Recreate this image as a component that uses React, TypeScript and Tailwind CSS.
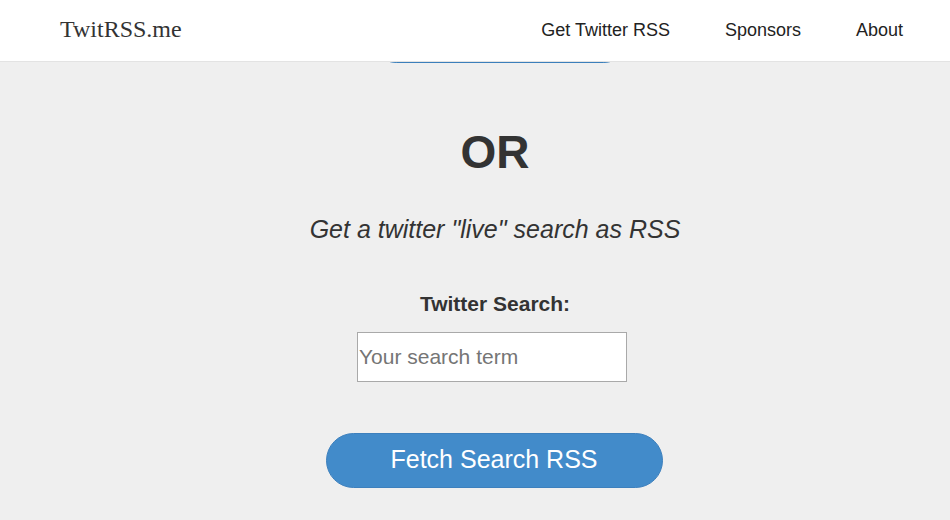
const NavLink = ({ label }: { label: string }) => (
    <a href="#" className="text-[18px] leading-[18px] text-[#222]">
        {label}
    </a>
);

const App = () => {
    return (
        <div className="min-h-screen bg-[#efefef] font-['Liberation_Sans',Arial,sans-serif] text-[#333]">
            <header className="relative z-10 h-[62px] bg-white border-b border-[#e3e3e3] flex items-center justify-between pl-[60px] pr-[47px]">
                <a href="#" className="font-['Liberation_Serif','Times_New_Roman',serif] text-[24px] leading-[24px] text-[#333] pb-[3px]">
                    TwitRSS.me
                </a>
                <nav className="flex items-center gap-[55px] pb-[1px]">
                    <NavLink label="Get Twitter RSS" />
                    <NavLink label="Sponsors" />
                    <NavLink label="About" />
                </nav>
            </header>

            <main className="flex flex-col items-center pl-10">
                {/* previous form's button, scrolled up under the header */}
                <div className="-mt-[54px] pl-[10px]">
                    <button className="block w-[262px] h-[55px] rounded-full bg-[#428bca] border border-[#3b7fbb]" />
                </div>

                <h2 className="mt-[66px] text-[46px] leading-[46px] font-bold">OR</h2>

                <p className="mt-[42px] text-[25px] leading-[25px] italic">
                    Get a twitter "live" search as RSS
                </p>

                <label htmlFor="term" className="mt-[51px] text-[21px] leading-[21px] font-bold">
                    Twitter Search:
                </label>

                <input
                    id="term"
                    type="text"
                    placeholder="Your search term"
                    className="mt-[18px] mr-[6px] w-[270px] h-[50px] bg-white border border-[#a9a9a9] px-[1px] text-[21px] text-[#333] placeholder:text-[#757575] outline-none"
                />

                <button className="mt-[51px] mr-[2px] w-[337px] h-[55px] pb-[3px] rounded-full bg-[#428bca] border border-[#3d80bd] text-white text-[25px] leading-[25px]">
                    Fetch Search RSS
                </button>
            </main>
        </div>
    );
};

export default App;
